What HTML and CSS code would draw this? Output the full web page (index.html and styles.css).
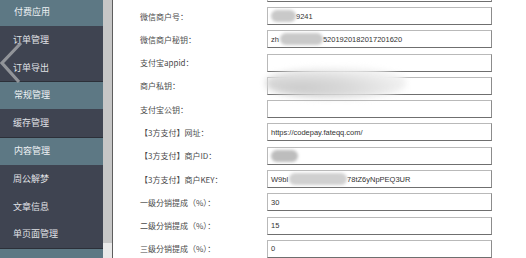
FILE: index.html
```html
<!DOCTYPE html>
<html lang="zh-CN">
<head>
    <meta charset="UTF-8">
    <meta name="viewport" content="width=device-width, initial-scale=1.0">
    <title>支付设置</title>
    <link rel="stylesheet" href="styles.css">
</head>
<body>
<div class="page">
    <nav class="sidebar">
        <div class="menu">
            <div class="menu-head">付费应用</div>
            <div class="menu-item">订单管理</div>
            <div class="menu-item">订单导出</div>
            <div class="menu-head">常规管理</div>
            <div class="menu-item">缓存管理</div>
            <div class="menu-head">内容管理</div>
            <div class="menu-item">周公解梦</div>
            <div class="menu-item">文章信息</div>
            <div class="menu-item">单页面管理</div>
            <div class="menu-head"></div>
        </div>
        <!-- slide back arrow over the menu -->
        <svg class="back-arrow" width="24" height="46" viewBox="0 0 24 46">
            <polyline points="21,3 2,23 19,42" fill="none" stroke="#9a9da1" stroke-width="3.2"/>
        </svg>
    </nav>
    <div class="scrollbar"><div class="thumb"></div></div>

    <main class="content">
        <form class="settings">
            <div class="row"><label></label><div class="field"></div></div>
            <div class="row"><label>微信商户号：</label><div class="field"><span class="smudge smudge-short"></span>9241</div></div>
            <div class="row"><label>微信商户秘钥：</label><div class="field">zh<span class="smudge smudge-mid"></span>5201920182017201620</div></div>
            <div class="row"><label>支付宝appid：</label><div class="field"></div></div>
            <div class="row"><label>商户私钥：</label><div class="field"><span class="cloud"></span></div></div>
            <div class="row"><label>支付宝公钥：</label><div class="field"></div></div>
            <div class="row"><label>【3方支付】网址：</label><div class="field">https://codepay.fateqq.com/</div></div>
            <div class="row"><label>【3方支付】商户ID：</label><div class="field"><span class="smudge smudge-id"></span></div></div>
            <div class="row"><label>【3方支付】商户KEY：</label><div class="field">W9bl<span class="smudge smudge-key"></span>78tZ6yNpPEQ3UR</div></div>
            <div class="row"><label>一级分销提成（%）：</label><div class="field">30</div></div>
            <div class="row"><label>二级分销提成（%）：</label><div class="field">15</div></div>
            <div class="row"><label>三级分销提成（%）：</label><div class="field">0</div></div>
        </form>
    </main>
</div>
</body>
</html>
```
FILE: styles.css
```css
body {
    margin: 0;
    font-family: "Noto Sans CJK SC", sans-serif;
    background: #fff;
}
.page {
    display: flex;
    height: 258px;
    overflow: hidden;
}

/* left menu */
.sidebar {
    position: relative;
    width: 103px;
    flex-shrink: 0;
    background: #3f4451;
    overflow: hidden;
}
.menu {
    margin-top: -2px;
}
.menu-head,
.menu-item {
    height: 27.8px;
    box-sizing: border-box;
    font-size: 9px;
    white-space: nowrap;
}
.menu-head {
    line-height: 26px;
    padding-left: 14px;
    background: #5d7884;
    color: #eef2f4;
    border-top: 1px solid #2c3039;
}
.menu-item {
    line-height: 27.8px;
    padding-left: 13px;
    color: #e0e2e6;
}
.back-arrow {
    position: absolute;
    left: 0;
    top: 40px;
    opacity: 0.9;
}

/* fake scrollbar of the menu frame */
.scrollbar {
    width: 9px;
    flex-shrink: 0;
    background: #e9e9e9;
    border-right: 1px solid #5e5e5e;
}
.thumb {
    height: 243px;
    background: #c6c6c6;
}

/* settings form */
.content {
    flex: 1;
    padding-left: 27px;
}
.settings {
    display: flex;
    flex-direction: column;
    gap: 5.3px;
    margin: -16.3px 0 0;
}
.row {
    display: flex;
    align-items: center;
    height: 18px;
}
.row label {
    width: 127px;
    flex-shrink: 0;
    font-size: 8px;
    color: #4a4a4a;
    white-space: nowrap;
}
.field {
    position: relative;
    display: flex;
    align-items: center;
    width: 225px;
    height: 18px;
    box-sizing: border-box;
    padding-left: 3px;
    border: 1px solid #b9b9b9;
    border-right-color: #8c8c8c;
    border-bottom-color: #6f6f6f;
    font: 7.5px "Liberation Sans", Arial, sans-serif;
    color: #333;
    white-space: nowrap;
}

/* blurred-out secrets */
.smudge {
    display: inline-block;
    height: 12px;
    border-radius: 6px;
    background: #c9c9c9;
    filter: blur(1.5px);
}
.smudge-short { width: 25px; }
.smudge-mid { width: 43px; margin-left: 1px; }
.smudge-id { width: 27px; background: #bdbdbd; }
.smudge-key { width: 58px; margin-left: 1px; background: #d0d0d0; }
.cloud {
    position: absolute;
    left: -2px;
    top: -10px;
    width: 140px;
    height: 30px;
    border-radius: 45%;
    background: radial-gradient(ellipse at 25% 65%, #cbcbcb 0%, #dadada 35%, #f0f0f0 70%);
    filter: blur(3px);
}
```
